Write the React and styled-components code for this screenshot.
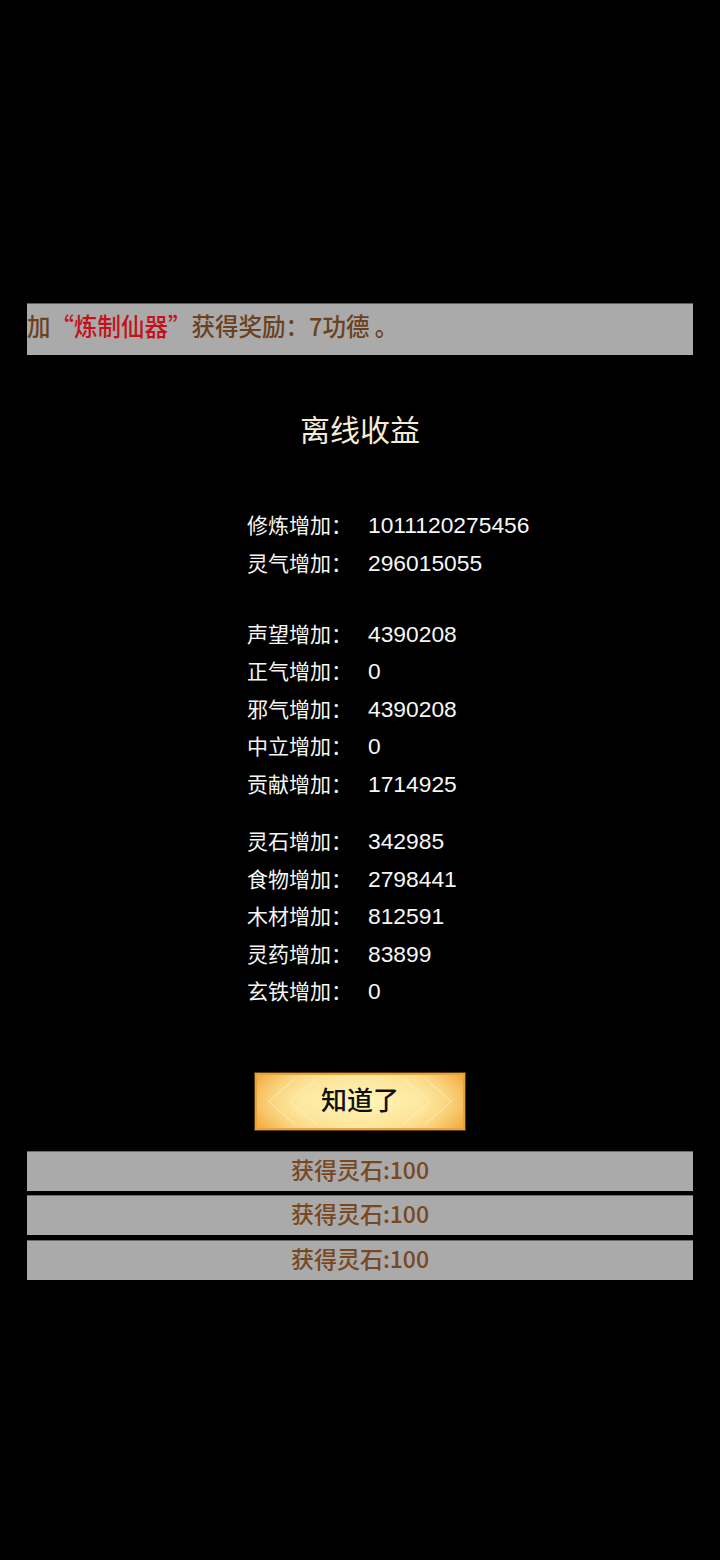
import React from "react";
import styled, { createGlobalStyle } from "styled-components";

const Global = createGlobalStyle`
  html, body { margin: 0; padding: 0; background: #000; }
  body { font-family: "Liberation Sans", "Noto Sans CJK SC", sans-serif; }
`;

const Page = styled.div`
  background: #000;
  min-height: 1560px;
  padding: 303px 27px 0;
  box-sizing: border-box;
  display: flex;
  flex-direction: column;
`;

const Marquee = styled.div`
  height: 52px;
  background: #aaaaaa;
  border-top: 1px solid #5e5e5e;
  box-sizing: border-box;
  padding-bottom: 7px;
  display: flex;
  align-items: center;
  overflow: hidden;
  white-space: nowrap;
  font-family: "Noto Sans CJK SC", sans-serif;
  font-size: 23.5px;
  font-weight: 500;
  color: #6b411f;
`;

const MarqueeText = styled.span`
  display: inline-block;
  transform: scaleY(1.05);
`;

const Red = styled.span`
  color: #c4121a;
`;

const Title = styled.div`
  margin-top: 53px;
  height: 40px;
  line-height: 40px;
  text-align: center;
  font-family: "Noto Sans CJK SC", sans-serif;
  font-size: 30px;
  font-weight: 400;
  color: #f4ecd6;
`;

const Stats = styled.div`
  margin-top: 58px;
  padding-left: 220px;
  display: flex;
  flex-direction: column;
`;

const Group = styled.div`
  margin-top: ${(p) => p.$gap || 0}px;
  display: flex;
  flex-direction: column;
`;

const Row = styled.div`
  display: flex;
  align-items: baseline;
  height: 37.5px;
  line-height: 37.5px;
  color: #f7f7f7;
`;

const Label = styled.span`
  width: 121px;
  flex: none;
  font-family: "Noto Sans CJK SC", sans-serif;
  font-size: 21px;
`;

const Value = styled.span`
  font-family: "Liberation Sans", sans-serif;
  font-size: 22.8px;
`;

const ButtonWrap = styled.div`
  margin-top: 62px;
  display: flex;
  justify-content: center;
`;

const GoldButton = styled.div`
  position: relative;
  width: 212px;
  height: 59px;
  box-sizing: border-box;
  border: 1px solid #5a3a10;
  box-shadow: inset 0 0 0 2px #e6a53a;
  background:
    radial-gradient(ellipse 60% 70% at 50% 50%, #fff6bd 0%, #fde9a0 45%, rgba(250, 205, 110, 0) 100%),
    linear-gradient(90deg, #f2ab3f 0%, #f9cf78 22%, #fde7a2 50%, #f9cf78 78%, #f2ab3f 100%);
  padding-bottom: 5px;
  display: flex;
  align-items: center;
  justify-content: center;
  overflow: hidden;
`;

const Deco = styled.svg`
  position: absolute;
  inset: 0;
  width: 100%;
  height: 100%;
`;

const ButtonText = styled.span`
  position: relative;
  font-family: "Noto Sans CJK SC", sans-serif;
  font-size: 26px;
  font-weight: 500;
  color: #111;
`;

const Bars = styled.div`
  margin-top: 20px;
  display: flex;
  flex-direction: column;
  gap: 4.5px;
`;

const Bar = styled.div`
  height: 40px;
  background: #aaaaaa;
  border-top: 1px solid #6a6a6a;
  box-sizing: border-box;
  padding-bottom: 5px;
  display: flex;
  align-items: center;
  justify-content: center;
  font-family: "Noto Sans CJK SC", sans-serif;
  font-size: 23px;
  font-weight: 500;
  color: #774821;
`;

const groups = [
  { gap: 0, rows: [["修炼增加：", "1011120275456"], ["灵气增加：", "296015055"]] },
  {
    gap: 33.5,
    rows: [
      ["声望增加：", "4390208"],
      ["正气增加：", "0"],
      ["邪气增加：", "4390208"],
      ["中立增加：", "0"],
      ["贡献增加：", "1714925"],
    ],
  },
  {
    gap: 20,
    rows: [
      ["灵石增加：", "342985"],
      ["食物增加：", "2798441"],
      ["木材增加：", "812591"],
      ["灵药增加：", "83899"],
      ["玄铁增加：", "0"],
    ],
  },
];

export default function App() {
  return (
    <>
      <Global />
      <Page>
        <Marquee>
          <MarqueeText>
            加<Red>“炼制仙器”</Red>获得奖励：7功德 。
          </MarqueeText>
        </Marquee>
        <Title>离线收益</Title>
        <Stats>
          {groups.map((g, i) => (
            <Group key={i} $gap={g.gap}>
              {g.rows.map(([l, v]) => (
                <Row key={l}>
                  <Label>{l}</Label>
                  <Value>{v}</Value>
                </Row>
              ))}
            </Group>
          ))}
        </Stats>
        <ButtonWrap>
          <GoldButton>
            <Deco viewBox="0 0 212 59" preserveAspectRatio="none">
              <g fill="none" stroke="#fff3c4" strokeWidth="1.2" opacity="0.5">
                <polyline points="40,6 14,29.5 40,53" />
                <polyline points="172,6 198,29.5 172,53" />
                <polyline points="62,6 36,29.5 62,53" />
                <polyline points="150,6 176,29.5 150,53" />
              </g>
            </Deco>
            <ButtonText>知道了</ButtonText>
          </GoldButton>
        </ButtonWrap>
        <Bars>
          <Bar>获得灵石:100</Bar>
          <Bar>获得灵石:100</Bar>
          <Bar>获得灵石:100</Bar>
        </Bars>
      </Page>
    </>
  );
}
